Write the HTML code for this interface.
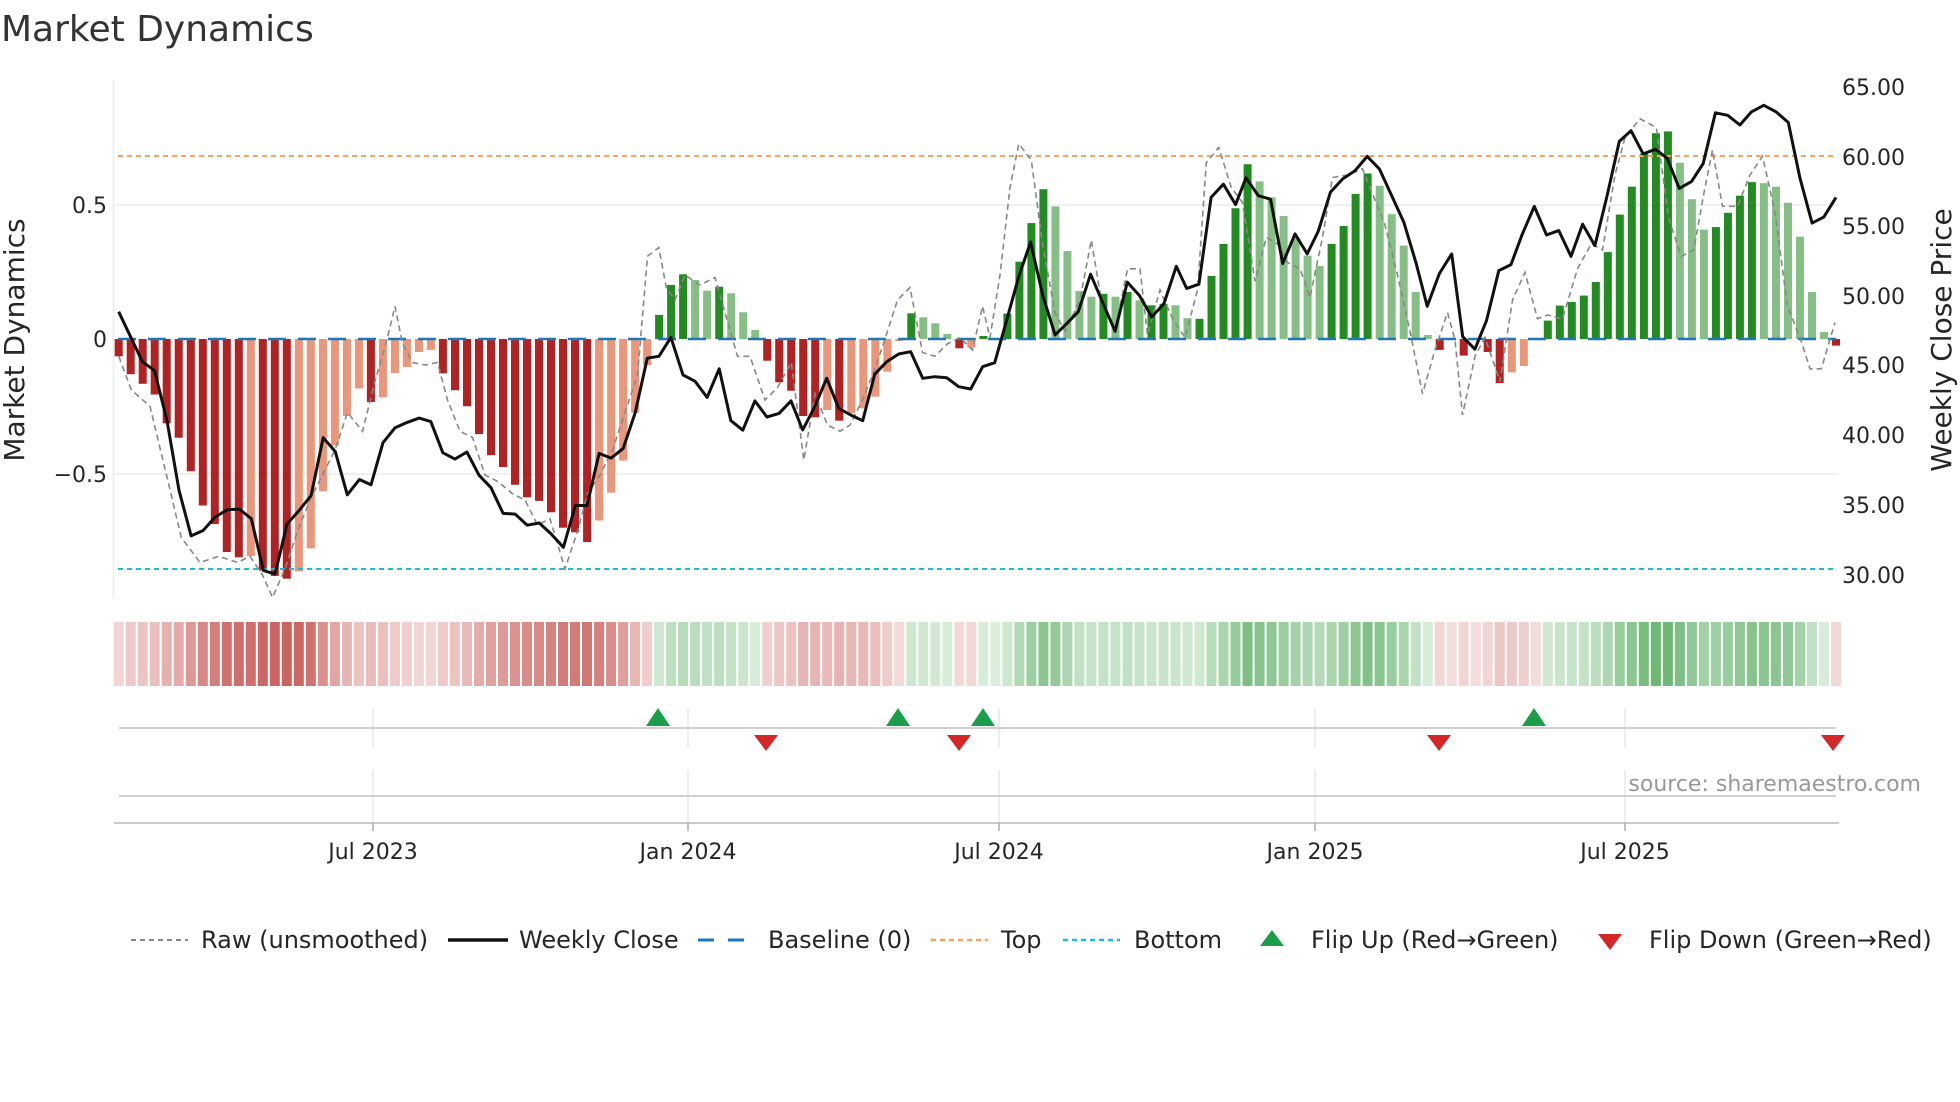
<!DOCTYPE html>
<html><head><meta charset="utf-8"><style>
html,body{margin:0;padding:0;background:#fff;width:1960px;height:1102px;overflow:hidden}
svg{display:block}
text{font-family:"DejaVu Sans","Liberation Sans",sans-serif}
</style></head><body>
<svg id="s" width="1960" height="1102" viewBox="0 0 1960 1102" xmlns="http://www.w3.org/2000/svg">
<g fill="#262626">
<text x="1" y="41" font-size="36" fill="#333">Market Dynamics</text>
</g>
<line x1="113.5" y1="80" x2="113.5" y2="598" stroke="#ebebf0" stroke-width="1.5"/>
<line x1="114" y1="205" x2="1839" y2="205" stroke="#ebebeb" stroke-width="1.5"/>
<line x1="114" y1="474" x2="1839" y2="474" stroke="#ebebeb" stroke-width="1.5"/>
<g id="bars"></g>
<line x1="118" y1="339" x2="1836" y2="339" stroke="#1f77b4" stroke-width="2.5" stroke-dasharray="18,12"/>
<line x1="118" y1="156" x2="1836" y2="156" stroke="#f4a460" stroke-width="2" stroke-dasharray="5,4"/>
<line x1="118" y1="569" x2="1836" y2="569" stroke="#17becf" stroke-width="2" stroke-dasharray="5,4"/>
<path id="raw" fill="none" stroke="#888" stroke-width="1.6" stroke-dasharray="6,4"/>
<path id="close" fill="none" stroke="#111" stroke-width="3" stroke-linejoin="round"/>
<g fill="#262626">
<text x="107" y="213" font-size="22" text-anchor="end">0.5</text>
<text x="107" y="347" font-size="22" text-anchor="end">0</text>
<text x="107" y="482" font-size="22" text-anchor="end">−0.5</text>
<text transform="translate(24,340) rotate(-90)" font-size="28" text-anchor="middle">Market Dynamics</text>
<g font-size="22">
<text x="1842" y="95">65.00</text><text x="1842" y="165">60.00</text><text x="1842" y="234">55.00</text>
<text x="1842" y="304">50.00</text><text x="1842" y="373">45.00</text><text x="1842" y="443">40.00</text>
<text x="1842" y="513">35.00</text><text x="1842" y="583">30.00</text>
</g>
<text transform="translate(1951,340) rotate(-90)" font-size="28" text-anchor="middle">Weekly Close Price</text>
</g>
<g id="strip"></g>
<g stroke="#e8e8ec" stroke-width="1.5">
<line x1="373" y1="709" x2="373" y2="747"/><line x1="688" y1="709" x2="688" y2="747"/><line x1="999" y1="709" x2="999" y2="747"/><line x1="1315" y1="709" x2="1315" y2="747"/><line x1="1625" y1="709" x2="1625" y2="747"/>
<line x1="373" y1="770" x2="373" y2="823"/><line x1="688" y1="770" x2="688" y2="823"/><line x1="999" y1="770" x2="999" y2="823"/><line x1="1315" y1="770" x2="1315" y2="823"/><line x1="1625" y1="770" x2="1625" y2="823"/>
</g>
<line x1="119" y1="728" x2="1836" y2="728" stroke="#d0d0d0" stroke-width="2"/>
<line x1="119" y1="796" x2="1836" y2="796" stroke="#d0d0d0" stroke-width="2"/>
<line x1="114" y1="823" x2="1839" y2="823" stroke="#cccccc" stroke-width="2"/>
<g stroke="#aaa" stroke-width="1.5">
<line x1="373" y1="823" x2="373" y2="831"/><line x1="688" y1="823" x2="688" y2="831"/><line x1="999" y1="823" x2="999" y2="831"/><line x1="1315" y1="823" x2="1315" y2="831"/><line x1="1625" y1="823" x2="1625" y2="831"/>
</g>
<g font-size="22" text-anchor="middle" fill="#262626">
<text x="373" y="859">Jul 2023</text><text x="688" y="859">Jan 2024</text><text x="999" y="859">Jul 2024</text><text x="1315" y="859">Jan 2025</text><text x="1625" y="859">Jul 2025</text>
</g>
<g id="mk"></g>
<text x="1921" y="791" font-size="22" fill="#999" text-anchor="end">source: sharemaestro.com</text>
<g font-size="24" fill="#262626">
<line x1="131" y1="940" x2="188" y2="940" stroke="#888" stroke-width="2" stroke-dasharray="5,4"/>
<text x="201" y="948">Raw (unsmoothed)</text>
<line x1="448" y1="940" x2="508" y2="940" stroke="#111" stroke-width="3.5"/>
<text x="519" y="948">Weekly Close</text>
<line x1="698" y1="940" x2="754" y2="940" stroke="#1f77b4" stroke-width="3" stroke-dasharray="16,14"/>
<text x="768" y="948">Baseline (0)</text>
<line x1="931" y1="940" x2="988" y2="940" stroke="#f4a460" stroke-width="2.5" stroke-dasharray="5,4"/>
<text x="1001" y="948">Top</text>
<line x1="1063" y1="940" x2="1120" y2="940" stroke="#17becf" stroke-width="2.5" stroke-dasharray="5,4"/>
<text x="1134" y="948">Bottom</text>
<polygon points="1260,946 1284,946 1272,930" fill="#1a9e4a"/>
<text x="1311" y="948">Flip Up (Red→Green)</text>
<polygon points="1598,934 1622,934 1610,950" fill="#d62728"/>
<text x="1649" y="948">Flip Down (Green→Red)</text>
</g>
</svg>
<script>
(function(){
var NS="http://www.w3.org/2000/svg";
function el(p,t,a){var e=document.createElementNS(NS,t);for(var k in a)e.setAttribute(k,a[k]);p.appendChild(e);return e;}
var B=[[356.3,'D'],[374.2,'D'],[383.8,'D'],[394.5,'D'],[423.4,'D'],[437.7,'D'],[471.3,'D'],[505.5,'D'],[524.1,'D'],[552,'D'],[557.3,'D'],[556.2,'L'],[570.5,'D'],[575.9,'D'],[578.7,'D'],[571.2,'L'],[548.4,'L'],[491.3,'L'],[445.6,'L'],[415.9,'L'],[388.4,'L'],[402,'D'],[397.4,'L'],[373.1,'L'],[367,'L'],[352,'L'],[349.9,'L'],[373.4,'D'],[390.2,'D'],[406.3,'D'],[434.1,'D'],[455.2,'D'],[467,'D'],[484.8,'D'],[497.3,'D'],[500.9,'D'],[512.3,'D'],[527.7,'D'],[532.3,'D'],[542,'D'],[520.5,'L'],[492.7,'L'],[460.6,'L'],[412.7,'L'],[365.2,'L'],[314.9,'G'],[284.9,'G'],
[274.3,'G'],[280,'g'],[290.7,'g'],[286.7,'G'],[293.3,'g'],[312.3,'g'],[330,'g'],[360.7,'D'],[382.3,'D'],[390.7,'D'],[416,'D'],[417.3,'D'],[410,'L'],[420.7,'D'],[413.3,'L'],[408.3,'L'],[396.7,'L'],[371.7,'L'],[341,'L'],[313.3,'G'],[317.3,'g'],[323.3,'g'],[334,'g'],[348.3,'D'],[347.7,'L'],[336,'G'],[338,'G'],
[313.5,'G'],[261.7,'G'],[223.1,'G'],[189.2,'G'],[206.4,'g'],[251,'g'],[291,'g'],[296.7,'g'],[293.8,'G'],[296.7,'g'],[292,'G'],[300.3,'g'],[305.3,'G'],[303.8,'G'],[305.3,'g'],[318.1,'g'],[318.8,'G'],[276,'G'],[243.9,'G'],[208.2,'G'],[164.2,'G'],[181.4,'g'],[197.4,'g'],[216,'g'],[237.8,'g'],[255.6,'g'],[266,'g'],[243.9,'G'],[226,'G'],[193.9,'G'],[173.5,'G'],[185.7,'g'],[214.2,'g'],[245.6,'g'],[292,'g'],[334.9,'g'],[349.9,'D'],[340,'D'],[355.6,'D'],[340,'D'],[352,'D'],[383.1,'D'],[372.4,'L'],[366,'L'],[340,'L'],[320.6,'G'],[305.6,'G'],[302,'G'],[295.6,'G'],[282,'G'],[252.1,'G'],[214.6,'G'],[186.7,'G'],[153.5,'G'],[133.2,'G'],[131.4,'G'],[162.8,'g'],[199.2,'g'],[229.6,'g'],[227.1,'G'],[212.8,'G'],[195.7,'G'],[182.1,'G'],[183.2,'g'],[186.7,'g'],[202.8,'g'],[236.7,'g'],[292,'g'],[332,'g'],[345.6,'D']];
var C={D:'#b22222',L:'#e9967a',G:'#228b22',g:'#85bf85'};
var n=B.length,x0=118.7,x1=1836,st=(x1-x0)/(n-1);
var gb=document.getElementById('bars'),gs=document.getElementById('strip');
for(var i=0;i<n;i++){var yy=B[i][0],c=B[i][1],x=x0+i*st;
 var ty=Math.min(yy,339),h=Math.abs(yy-339);
 if(h>0.8)el(gb,'rect',{x:(x-4).toFixed(1),y:ty.toFixed(1),width:8,height:h.toFixed(1),fill:C[c]});
 var v=Math.min(h/240,1),a=0.18+0.62*v;
 var red=(c=='D'||c=='L');
 var col=red?'rgba(190,60,55,'+a.toFixed(2)+')':'rgba(40,150,50,'+(a*0.95).toFixed(2)+')';
 el(gs,'rect',{x:(x-st/2+1).toFixed(1),y:622,width:(st-2).toFixed(1),height:64,fill:col});
}
var P=[[42,705],[95,845],[122,870],[150,1010],[177,1205],[204,1333],[231,1318],[258,1280],[285,1260],[312,1258],[339,1285],[366,1430],[392,1440],[419,1300],[446,1262],[473,1220],[500,1058],[527,1097],[554,1218],[581,1175],[607,1190],[634,1072],[661,1030],[688,1015],[715,1003],[741,1013],[768,1100],[795,1118],[822,1098],[849,1163],[876,1198],[903,1270],[930,1272],[957,1303],[984,1297],[1011,1328],[1038,1365],[1065,1248],[1091,1248],[1118,1102],[1145,1115],[1172,1088],[1199,988],[1226,835],[1252,830],[1279,777],[1306,882],[1333,900],[1360,945],[1387,865],[1413,1010],[1440,1037],[1467,955],[1494,1000],[1521,990],[1548,955]];
var pts=P.map(function(p){return [100+p[0]*0.4464,60+p[1]*0.357];});
var Q=[[368,750],[404,680],[440,595],[476,685],[512,705],[548,722],[584,583],[620,545],[656,522],[692,515],[728,595],[764,590],[800,593],[836,620],[872,627],[908,560],[944,548],[980,420],[1016,290]];
Q.forEach(function(p){pts.push([680+p[0]/3,180+p[1]/3]);});
var R=[[50,510],[70,660],[90,770],[108,740],[128,705],[148,600],[168,680],[188,760],[208,622],[228,660],[248,720],[268,682],[288,578],[305,640],[325,628],[345,385],[365,348],[385,405],[402,330],[422,380],[442,390],[462,570],[482,487],[502,543],[520,480],[540,370],[560,333],[580,310],[600,270],[620,305],[640,380],[660,455],[680,570],[698,690],[718,598],[738,543],[756,775],[776,810],[795,730],[815,590],[835,573],[853,490],[873,410],[893,490],[913,478],[933,550],[952,460],[972,520],[992,380],[1012,228],[1031,198],[1051,263],[1071,250],[1090,275],[1110,360],[1130,340],[1149,290],[1169,148],[1189,155],[1209,182],[1228,145],[1248,127],[1268,145],[1288,175],[1307,330],[1327,457],[1346,440],[1366,385]];
R.forEach(function(p){pts.push([1000+p[0]*0.612,60+p[1]*0.357]);});
document.getElementById('close').setAttribute('d','M'+pts.map(function(p){return p[0].toFixed(1)+','+p[1].toFixed(1);}).join(' L'));
var W=[[95,285],[105,312],[120,325],[132,375],[145,430],[160,450],[175,445],[190,450],[200,445],[210,460],[218,478],[228,455],[238,425],[248,400],[258,380],[268,360],[278,330],[290,345],[300,305],[310,270],[316,245],[322,275],[330,290],[340,292],[350,290],[358,320],[368,345],[378,350],[388,380],[398,385],[410,395],[420,400],[430,420],[440,415],[452,455],[462,425],[470,395],[480,380],[490,360],[500,330],[510,300],[518,205],[527,198],[533,230],[540,240],[548,220],[560,228],[572,222],[580,250],[590,285],[600,285],[612,320],[622,310],[633,290],[643,368],[652,315],[662,340],[672,345],[680,340],[690,320],[700,295],[710,265],[718,240],[728,230],[738,282],[748,285],[758,275],[768,270],[778,280],[786,245],[792,270],[800,220],[808,150],[815,115],[825,128],[834,195],[844,250],[852,265],[864,240],[873,192],[881,240],[892,265],[902,215],[912,215],[918,268],[928,232],[938,255],[948,270],[958,232],[965,130],[975,118],[985,150],[994,162],[1004,225],[1013,190],[1022,195],[1030,210],[1040,215],[1048,238],[1058,190],[1066,142],[1078,140],[1090,135],[1100,160],[1108,180],[1118,220],[1128,265],[1138,315],[1148,280],[1158,250],[1164,272],[1170,332],[1180,285],[1188,270],[1200,305],[1210,240],[1220,218],[1230,255],[1238,252],[1250,255],[1262,215],[1273,195],[1282,200],[1292,140],[1300,110],[1312,95],[1325,102],[1335,175],[1345,205],[1355,200],[1363,155],[1370,120],[1378,165],[1390,165],[1400,140],[1410,125],[1420,170],[1430,245],[1440,270],[1448,295],[1457,295],[1468,258]];
document.getElementById('raw').setAttribute('d','M'+W.map(function(p){return (p[0]*1.25).toFixed(1)+','+(p[1]*1.25).toFixed(1);}).join(' L'));
var mk=document.getElementById('mk');
[658,898,983,1534].forEach(function(x){el(mk,'polygon',{points:(x-12)+',726 '+(x+12)+',726 '+x+',708',fill:'#1a9e4a'});});
[766,959,1439,1833].forEach(function(x){el(mk,'polygon',{points:(x-12)+',735 '+(x+12)+',735 '+x+',751',fill:'#d62728'});});
})();
</script>
</body></html>
